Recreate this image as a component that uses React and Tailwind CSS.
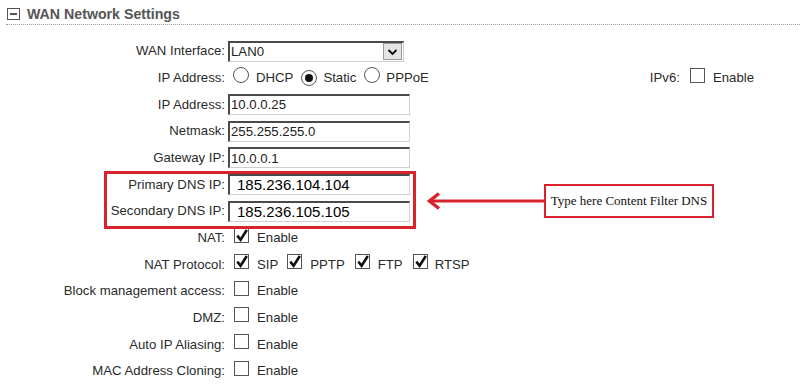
import React from "react";

const ROW = "flex items-center h-[26.67px]";

function Label({ children }) {
  return <div className="w-[225px] shrink-0 text-right whitespace-nowrap">{children}</div>;
}

function Check({ checked }) {
  return (
    <span className="relative inline-flex w-[15px] h-[15px] border border-[#555] bg-white items-center justify-center shrink-0">
      {checked && (
        <svg className="absolute left-[0px] top-[-1px]" width="14" height="15" viewBox="0 0 14 15">
          <path d="M2.3 7.6 L5.6 11.8 L11.8 2" fill="none" stroke="#111" strokeWidth="2.6" strokeLinecap="butt" strokeLinejoin="miter" />
        </svg>
      )}
    </span>
  );
}

function Radio({ checked }) {
  return (
    <span className="inline-flex w-[16px] h-[16px] rounded-full border border-[#555] bg-white items-center justify-center shrink-0">
      {checked && <span className="w-[8px] h-[8px] rounded-full bg-[#111]" />}
    </span>
  );
}

function TextInput({ value, big }) {
  return (
    <div
      className={
        "ml-[3px] w-[182px] h-[21px] bg-white border-t-2 border-l-2 border-r border-b border-t-[#4a4a4a] border-l-[#4a4a4a] border-r-[#cfcfcf] border-b-[#cfcfcf] flex items-center " +
        (big ? "pl-[7px] text-[15px] text-black" : "pl-[1px] text-[13.2px] text-[#222]")
      }
    >
      {value}
    </div>
  );
}

function CheckRow({ label, checked }) {
  return (
    <div className={ROW}>
      <Label>{label}</Label>
      <span className="ml-[9px]">
        <Check checked={checked} />
      </span>
      <span className="ml-[8px]">Enable</span>
    </div>
  );
}

export default function App() {
  return (
    <div
      className="relative w-[800px] h-[392px] bg-white text-[13.2px] text-[#2a2a2a] overflow-hidden"
      style={{ fontFamily: '"Liberation Sans", Arial, sans-serif' }}
    >
      {/* Header */}
      <div className="flex items-end h-[25px] ml-[6px] border-b border-dotted border-[#9a9a9a] pb-[3px]">
        <span className="ml-[1px] mb-[1px] w-[13px] h-[12px] border border-[#555] flex items-center justify-center">
          <span className="w-[7px] h-[2px] bg-[#555]" />
        </span>
        <span className="ml-[7px] text-[14.2px] font-bold text-[#555] leading-none">WAN Network Settings</span>
      </div>

      <div className="mt-[13px] flex flex-col">
        {/* WAN Interface */}
        <div className={ROW}>
          <Label>WAN Interface:</Label>
          <div className="ml-[3px] w-[176px] h-[21px] bg-white border-t-2 border-l-2 border-r border-b border-t-[#4a4a4a] border-l-[#4a4a4a] border-r-[#cfcfcf] border-b-[#cfcfcf] flex items-center">
            <span className="pl-[1px] flex-1 text-[#222]">LAN0</span>
            <span className="mr-[1px] w-[19px] h-[17px] bg-[#e4e4e4] border border-[#9a9a9a] flex items-center justify-center">
              <svg width="11" height="8" viewBox="0 0 11 8">
                <path d="M1.5 2 L5.5 6 L9.5 2" fill="none" stroke="#111" strokeWidth="1.9" />
              </svg>
            </span>
          </div>
        </div>

        {/* IP Address radios */}
        <div className={ROW}>
          <Label>IP Address:</Label>
          <span className="ml-[8px]">
            <Radio />
          </span>
          <span className="ml-[7px]">DHCP</span>
          <span className="ml-[8px]">
            <Radio checked />
          </span>
          <span className="ml-[6px]">Static</span>
          <span className="ml-[8px]">
            <Radio />
          </span>
          <span className="ml-[6px]">PPPoE</span>
          <div className="ml-auto mr-[46px] flex items-center">
            <span>IPv6:</span>
            <span className="ml-[10px]">
              <Check />
            </span>
            <span className="ml-[8px]">Enable</span>
          </div>
        </div>

        <div className={ROW}>
          <Label>IP Address:</Label>
          <TextInput value="10.0.0.25" />
        </div>
        <div className={ROW}>
          <Label>Netmask:</Label>
          <TextInput value="255.255.255.0" />
        </div>
        <div className={ROW}>
          <Label>Gateway IP:</Label>
          <TextInput value="10.0.0.1" />
        </div>
        <div className={ROW}>
          <Label>Primary DNS IP:</Label>
          <TextInput value="185.236.104.104" big />
        </div>
        <div className={ROW}>
          <Label>Secondary DNS IP:</Label>
          <TextInput value="185.236.105.105" big />
        </div>

        <CheckRow label="NAT:" checked />

        <div className={ROW}>
          <Label>NAT Protocol:</Label>
          <span className="ml-[9px]">
            <Check checked />
          </span>
          <span className="ml-[8px]">SIP</span>
          <span className="ml-[9px]">
            <Check checked />
          </span>
          <span className="ml-[8px]">PPTP</span>
          <span className="ml-[10px]">
            <Check checked />
          </span>
          <span className="ml-[8px]">FTP</span>
          <span className="ml-[10px]">
            <Check checked />
          </span>
          <span className="ml-[7px]">RTSP</span>
        </div>

        <CheckRow label="Block management access:" />
        <CheckRow label="DMZ:" />
        <CheckRow label="Auto IP Aliasing:" />
        <CheckRow label="MAC Address Cloning:" />
      </div>

      {/* Annotation: red highlight box */}
      <div className="absolute left-[104px] top-[171px] w-[312px] h-[58px] border-[3px] border-[#d8232f]" />

      {/* Annotation: arrow */}
      <svg className="absolute left-[424px] top-[190px]" width="122" height="24" viewBox="0 0 122 24">
        <path d="M7 11 L121 11" stroke="#d8232f" strokeWidth="3" />
        <path d="M15 3.5 L5.5 11 L15 18.5" fill="none" stroke="#d8232f" strokeWidth="3.5" strokeLinejoin="miter" />
      </svg>

      {/* Annotation: callout */}
      <div
        className="absolute left-[544px] top-[184px] w-[170px] h-[34px] border-2 border-[#d8232f] bg-white flex items-center justify-center text-[13px] text-[#111]"
        style={{ fontFamily: '"Liberation Serif", "Times New Roman", serif' }}
      >
        Type here Content Filter DNS
      </div>
    </div>
  );
}
